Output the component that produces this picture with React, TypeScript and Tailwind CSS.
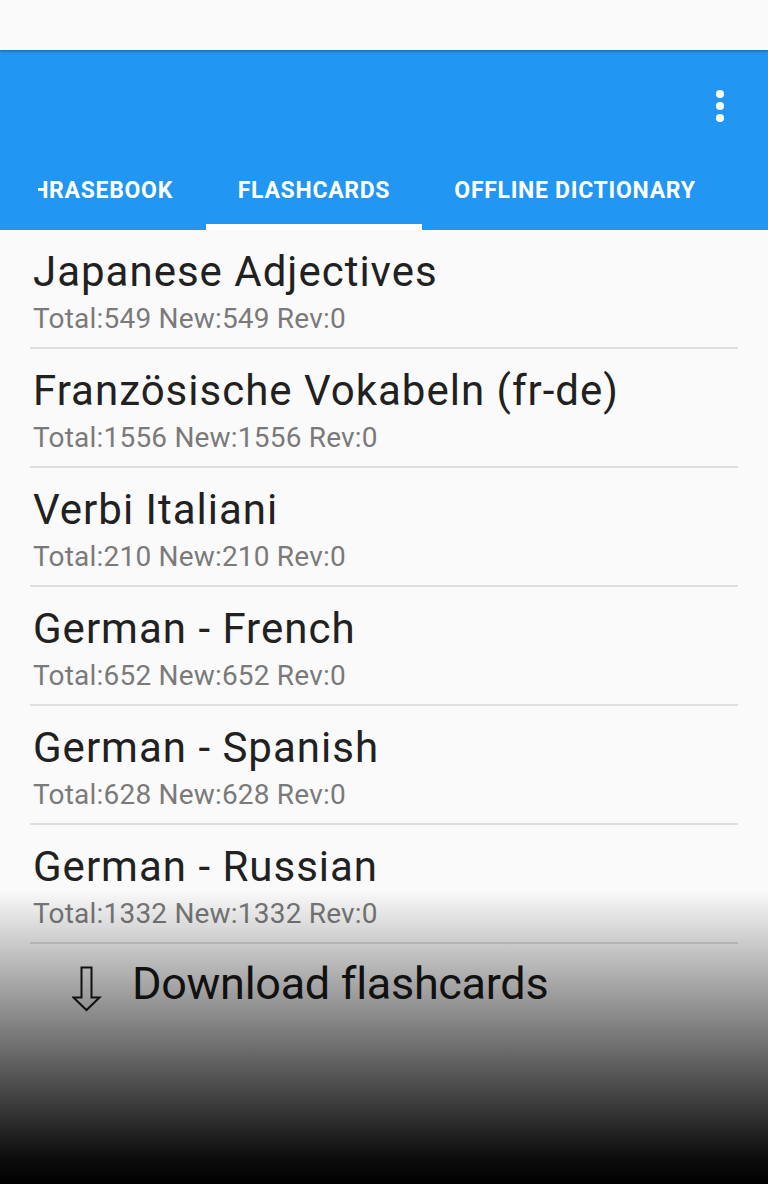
import React from "react";

const decks = [
  { title: "Japanese Adjectives", sub: "Total:549 New:549 Rev:0" },
  { title: "Französische Vokabeln (fr-de)", sub: "Total:1556 New:1556 Rev:0" },
  { title: "Verbi Italiani", sub: "Total:210 New:210 Rev:0" },
  { title: "German - French", sub: "Total:652 New:652 Rev:0" },
  { title: "German - Spanish", sub: "Total:628 New:628 Rev:0" },
  { title: "German - Russian", sub: "Total:1332 New:1332 Rev:0" },
];

export default function App() {
  return (
    <div
      className="relative w-[768px] h-[1184px] overflow-hidden bg-[#fafafa]"
      style={{ fontFamily: "Roboto, 'Noto Sans', sans-serif" }}
    >
      <div className="relative z-10 h-[50px] bg-[#fafafa] shadow-[0_1px_3px_rgba(0,0,0,0.35)]" />
      <div className="bg-[#2196f3] h-[180px] flex flex-col">
        <div className="h-[112px] flex items-start justify-end pr-[44px] pt-[40px]">
          <div className="flex flex-col items-center gap-[4px]">
            <div className="w-[8px] h-[8px] rounded-full bg-white" />
            <div className="w-[8px] h-[8px] rounded-full bg-white" />
            <div className="w-[8px] h-[8px] rounded-full bg-white" />
          </div>
        </div>
        <div className="flex h-[68px] text-white font-bold text-[23px] tracking-[0.7px]">
          <div className="ml-[38px] w-[168px] overflow-hidden flex justify-end items-center pr-[33px] pb-[10px] whitespace-nowrap">
            <span className="shrink-0">PHRASEBOOK</span>
          </div>
          <div className="w-[216px] flex flex-col">
            <div className="flex-1 flex items-center justify-center pb-[4px]">FLASHCARDS</div>
            <div className="h-[6px] bg-white" />
          </div>
          <div className="w-[306px] flex items-center justify-center pb-[10px] whitespace-nowrap">
            OFFLINE DICTIONARY
          </div>
        </div>
      </div>
      <div className="px-[30px]">
        {decks.map((d) => (
          <div key={d.title} className="h-[119px] border-b-2 border-[#dedede] pt-[14px] pl-[3px]">
            <div className="text-[42px] leading-[56px] text-[#212121] tracking-[1px]">{d.title}</div>
            <div className="text-[28px] leading-[36px] text-[#7a7a7a] tracking-[0.2px] mt-[1px]">{d.sub}</div>
          </div>
        ))}
      </div>
      <div className="absolute left-0 right-0 bottom-0 h-[294px] bg-[linear-gradient(to_bottom,rgba(0,0,0,0)_0%,rgba(0,0,0,0.94)_90%,#000_100%)]">
        <div className="flex items-center pl-[72px] pt-[66px] gap-[30px]">
          <svg width="30" height="46" viewBox="0 0 30 46" className="mt-[10px]">
            <path
              d="M9.5 1.5 H19.5 V31.5 H27.5 L14.5 44 L1.5 31.5 H9.5 Z"
              fill="none"
              stroke="#111"
              strokeWidth="2"
              strokeLinejoin="miter"
            />
          </svg>
          <span className="text-[45px] leading-[50px] text-[#111] tracking-[-0.3px]">Download flashcards</span>
        </div>
      </div>
    </div>
  );
}
